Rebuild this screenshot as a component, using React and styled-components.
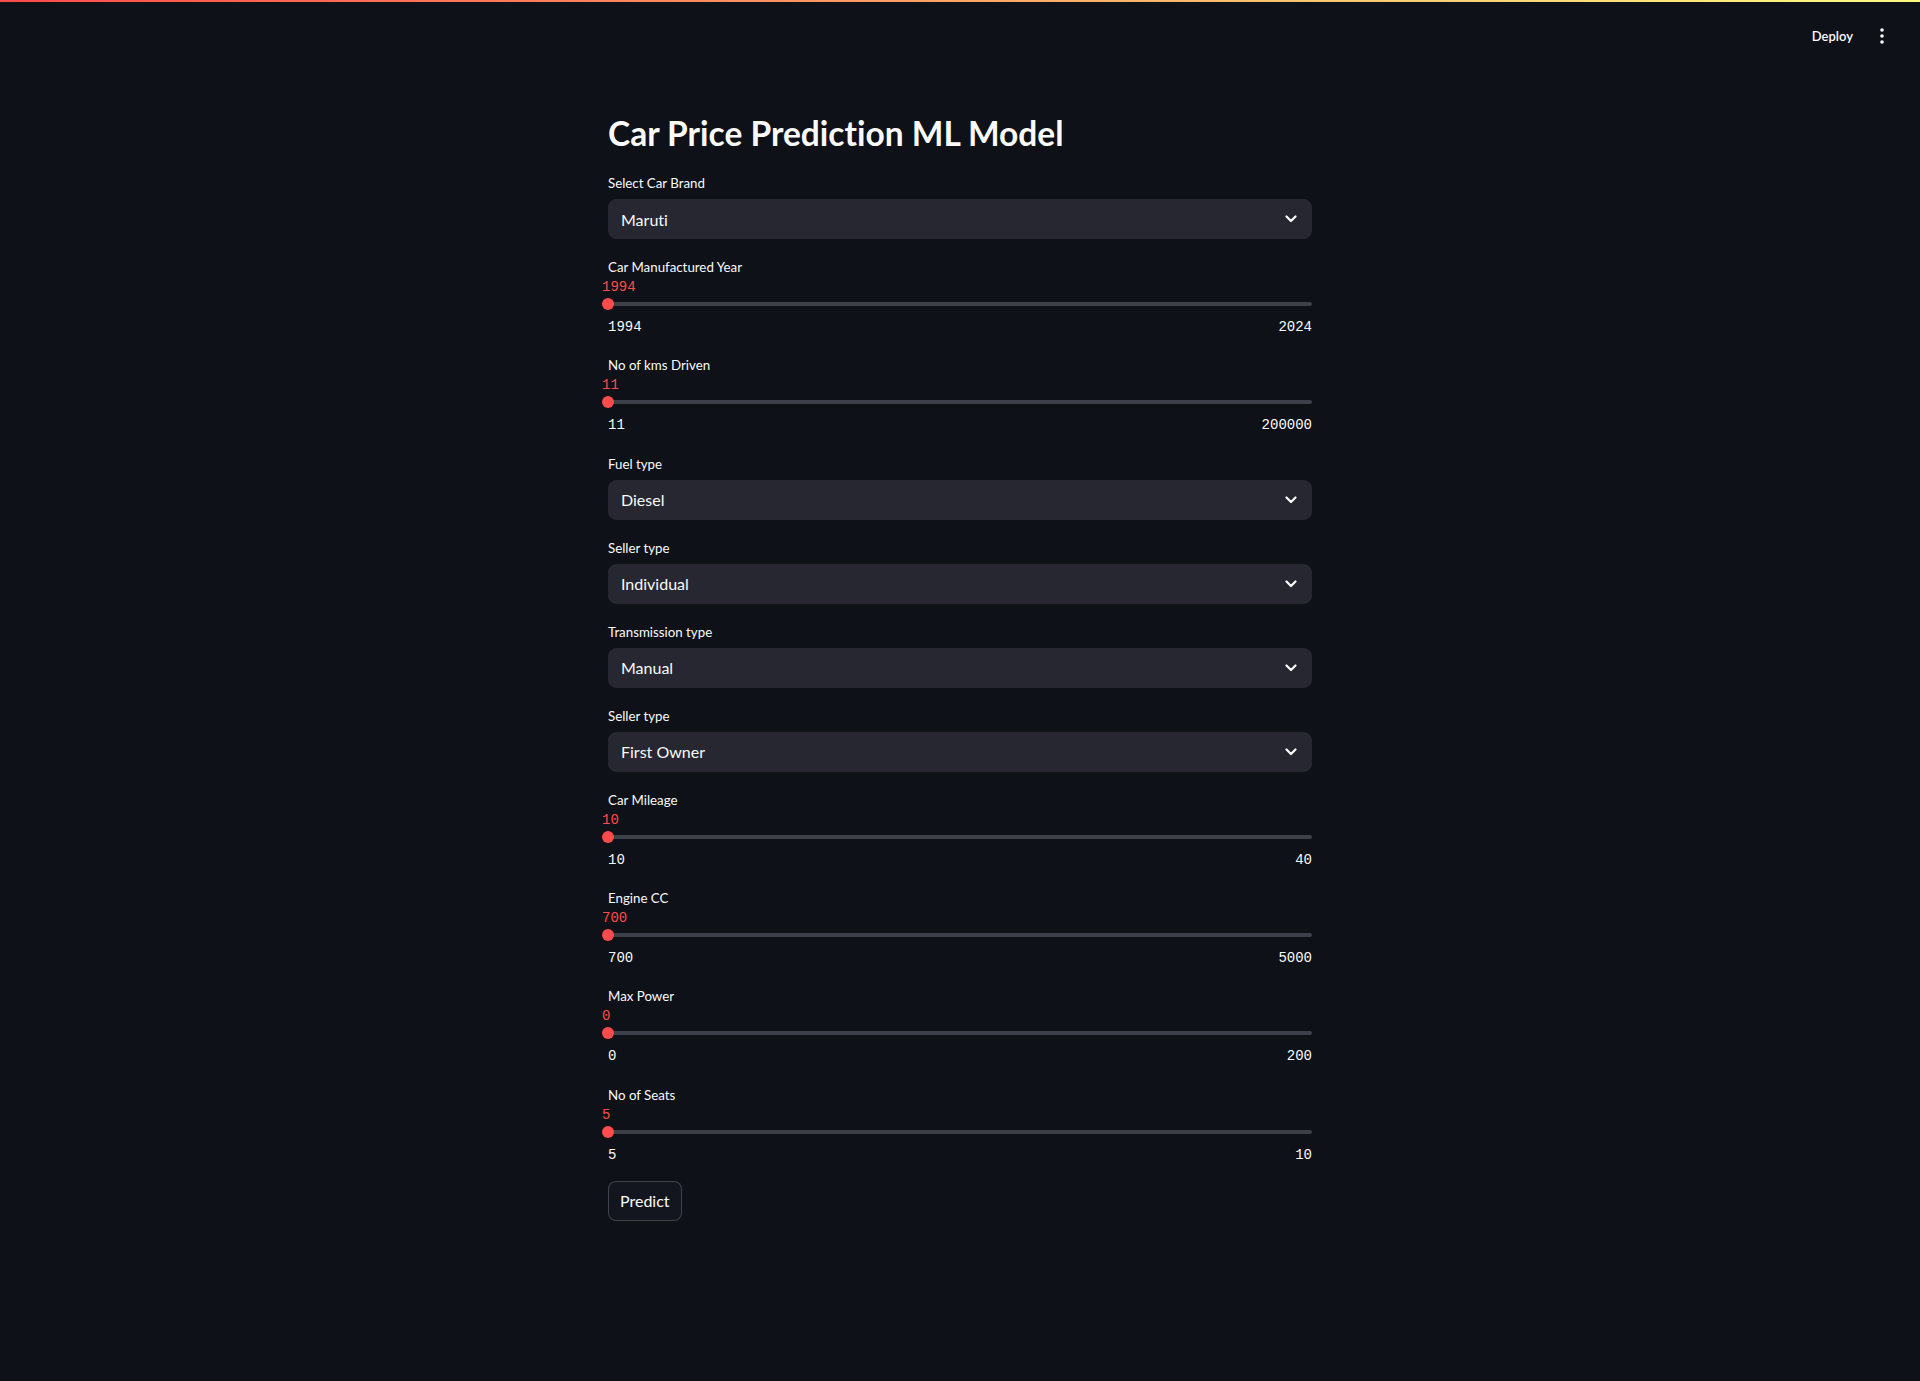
import React from "react";
import styled, { createGlobalStyle } from "styled-components";

const GlobalStyle = createGlobalStyle`
  html, body { margin: 0; padding: 0; background: #0e1117; }
  body {
    font-family: "Lato", "Noto Sans", "Liberation Sans", sans-serif;
    font-variant-ligatures: none;
    color: rgb(250, 250, 250);
  }
  * { box-sizing: border-box; }
`;

const Page = styled.div`
  min-height: 1381px;
  background: #0e1117;
  display: flex;
  flex-direction: column;
`;

const Decoration = styled.div`
  height: 2px;
  background: linear-gradient(90deg, rgb(255, 75, 75), rgb(255, 253, 128));
`;

const Header = styled.header`
  height: 58px;
  padding: 10px 28px 0 0;
  display: flex;
  align-items: center;
  justify-content: flex-end;
  gap: 19px;
`;

const DeployButton = styled.button`
  background: transparent;
  border: none;
  padding: 0;
  color: rgb(250, 250, 250);
  font-family: inherit;
  font-size: 13px;
  font-weight: 600;
  line-height: 20px;
  cursor: pointer;
`;

const MenuButton = styled.button`
  background: transparent;
  border: none;
  padding: 0;
  width: 20px;
  height: 24px;
  display: flex;
  align-items: center;
  justify-content: center;
  color: rgb(250, 250, 250);
`;

const Main = styled.main`
  width: 704px;
  margin: 0 auto;
  padding-top: 50px;
  display: flex;
  flex-direction: column;
  gap: 16px;
`;

const Title = styled.h1`
  margin: 0 0 -1px;
  font-size: 33.5px;
  font-weight: 700;
  line-height: 46px;
  font-variant-ligatures: none;
  color: rgb(250, 250, 250);
`;

const Widget = styled.div`
  display: flex;
  flex-direction: column;
`;

const Label = styled.label`
  height: 24px;
  display: flex;
  align-items: center;
  font-size: 13.3px;
  line-height: 20px;
  color: rgb(250, 250, 250);
  margin-bottom: ${(p) => (p.$tight ? "0" : "4px")};
`;

const SelectBox = styled.div`
  height: 40px;
  border-radius: 8px;
  border: 1px solid #262730;
  background: #262730;
  display: flex;
  align-items: center;
  justify-content: space-between;
  padding: 0 14px 0 12px;
  font-size: 16px;
  color: rgb(250, 250, 250);
`;

const SliderBody = styled.div`
  display: flex;
  flex-direction: column;
  padding-bottom: 0.35px;
`;

const ValueRow = styled.div`
  position: relative;
  height: 16px;
`;

const ThumbValue = styled.span`
  position: absolute;
  top: 1px;
  font-family: "Liberation Mono", "DejaVu Sans Mono", monospace;
  font-size: 14px;
  line-height: 15px;
  color: rgb(255, 75, 75);
  white-space: nowrap;
`;

const TrackRow = styled.div`
  position: relative;
  height: 12px;
  margin-top: 3px;
  display: flex;
  align-items: center;
`;

const Track = styled.div`
  width: 100%;
  height: 4px;
  border-radius: 2px;
  background: #3d4049;
`;

const Thumb = styled.div`
  position: absolute;
  top: 0;
  width: 12px;
  height: 12px;
  border-radius: 50%;
  background: rgb(255, 75, 75);
`;

const TickRow = styled.div`
  margin-top: 7px;
  height: 20px;
  display: flex;
  align-items: center;
  justify-content: space-between;
  font-family: "Liberation Mono", "DejaVu Sans Mono", monospace;
  font-size: 14px;
  color: rgb(250, 250, 250);
`;

const Button = styled.button`
  align-self: flex-start;
  height: 40px;
  padding: 0 11px;
  border-radius: 8px;
  border: 1px solid rgba(250, 250, 250, 0.2);
  background: #13161e;
  color: rgb(250, 250, 250);
  font-family: inherit;
  font-size: 16px;
  line-height: 24px;
  cursor: pointer;
`;

const Chevron = () => (
  <svg width="12" height="8" viewBox="0 0 12 8" fill="none">
    <path d="M1.5 1.5 L6 6 L10.5 1.5" stroke="rgb(250,250,250)" strokeWidth="2.2" strokeLinecap="round" strokeLinejoin="round" />
  </svg>
);

const Dots = () => (
  <svg width="4" height="16" viewBox="0 0 4 16" fill="rgb(250,250,250)">
    <circle cx="2" cy="2" r="1.8" />
    <circle cx="2" cy="8" r="1.8" />
    <circle cx="2" cy="14" r="1.8" />
  </svg>
);

const Select = ({ label, value }) => (
  <Widget>
    <Label>{label}</Label>
    <SelectBox>
      <span>{value}</span>
      <Chevron />
    </SelectBox>
  </Widget>
);

const Slider = ({ label, min, max, value }) => {
  const pct = ((value - min) / (max - min)) * 100;
  return (
    <Widget>
      <Label $tight>{label}</Label>
      <SliderBody>
        <ValueRow>
          <ThumbValue style={{ left: `calc(${pct}% - 6px)` }}>{value}</ThumbValue>
        </ValueRow>
        <TrackRow>
          <Track />
          <Thumb style={{ left: `calc(${pct}% - 6px)` }} />
        </TrackRow>
        <TickRow>
          <span>{min}</span>
          <span>{max}</span>
        </TickRow>
      </SliderBody>
    </Widget>
  );
};

export default function App() {
  return (
    <Page>
      <GlobalStyle />
      <Decoration />
      <Header>
        <DeployButton>Deploy</DeployButton>
        <MenuButton aria-label="Main menu">
          <Dots />
        </MenuButton>
      </Header>
      <Main>
        <Title>Car Price Prediction ML Model</Title>
        <Select label="Select Car Brand" value="Maruti" />
        <Slider label="Car Manufactured Year" min={1994} max={2024} value={1994} />
        <Slider label="No of kms Driven" min={11} max={200000} value={11} />
        <Select label="Fuel type" value="Diesel" />
        <Select label="Seller type" value="Individual" />
        <Select label="Transmission type" value="Manual" />
        <Select label="Seller type" value="First Owner" />
        <Slider label="Car Mileage" min={10} max={40} value={10} />
        <Slider label="Engine CC" min={700} max={5000} value={700} />
        <Slider label="Max Power" min={0} max={200} value={0} />
        <Slider label="No of Seats" min={5} max={10} value={5} />
        <Button>Predict</Button>
      </Main>
    </Page>
  );
}
